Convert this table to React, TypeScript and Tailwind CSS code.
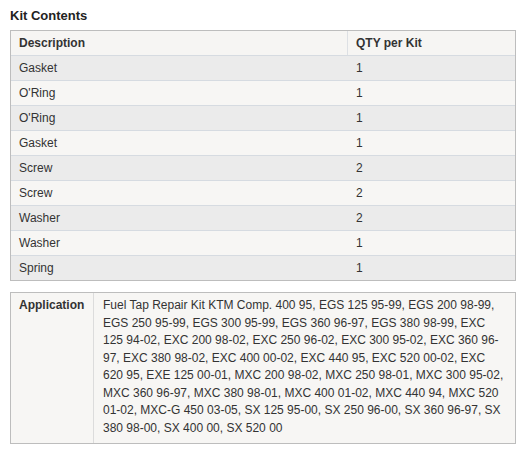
const rows: [string, string][] = [
  ["Gasket", "1"],
  ["O'Ring", "1"],
  ["O'Ring", "1"],
  ["Gasket", "1"],
  ["Screw", "2"],
  ["Screw", "2"],
  ["Washer", "2"],
  ["Washer", "1"],
  ["Spring", "1"],
];

const application =
  "Fuel Tap Repair Kit KTM Comp. 400 95, EGS 125 95-99, EGS 200 98-99, EGS 250 95-99, EGS 300 95-99, EGS 360 96-97, EGS 380 98-99, EXC 125 94-02, EXC 200 98-02, EXC 250 96-02, EXC 300 95-02, EXC 360 96-97, EXC 380 98-02, EXC 400 00-02, EXC 440 95, EXC 520 00-02, EXC 620 95, EXE 125 00-01, MXC 200 98-02, MXC 250 98-01, MXC 300 95-02, MXC 360 96-97, MXC 380 98-01, MXC 400 01-02, MXC 440 94, MXC 520 01-02, MXC-G 450 03-05, SX 125 95-00, SX 250 96-00, SX 360 96-97, SX 380 98-00, SX 400 00, SX 520 00";

export default function App() {
  return (
    <div className="min-h-[455px] bg-white px-[10px] pt-[8px] font-['Liberation_Sans',Arial,sans-serif] text-[12px] text-[#333]">
      <h2 className="mb-[6px] text-[13px] font-bold leading-[16px] text-[#222]">Kit Contents</h2>

      {/* kit contents table */}
      <div className="w-[506px] border border-[#bdbdbd]">
        <div className="flex h-[24px] items-center bg-[#f6f5f3] font-bold">
          <div className="w-[336px] pl-[8px]">Description</div>
          <div className="flex h-full flex-1 items-center border-l border-[#dde0e4] pl-[8px]">QTY per Kit</div>
        </div>
        {rows.map(([desc, qty], i) => (
          <div
            key={i}
            className={`flex h-[25px] items-center border-t border-[#d6dbe1] ${
              i % 2 === 0 ? "bg-[#ebebeb]" : "bg-[#f7f6f4]"
            }`}
          >
            <div className="w-[336px] pl-[8px]">{desc}</div>
            <div className="flex-1 pl-[9px]">{qty}</div>
          </div>
        ))}
      </div>

      {/* application table */}
      <div className="mt-[11px] flex w-[506px] border border-[#bdbdbd] bg-[#f7f6f4]">
        <div className="w-[82px] shrink-0 pl-[8px] pt-[4px] font-bold leading-[17.5px]">Application</div>
        <div className="flex-1 border-l border-[#dcdcdc] pb-[6px] pl-[9px] pr-[8px] pt-[4px] leading-[17.5px]">
          {application}
        </div>
      </div>
    </div>
  );
}
